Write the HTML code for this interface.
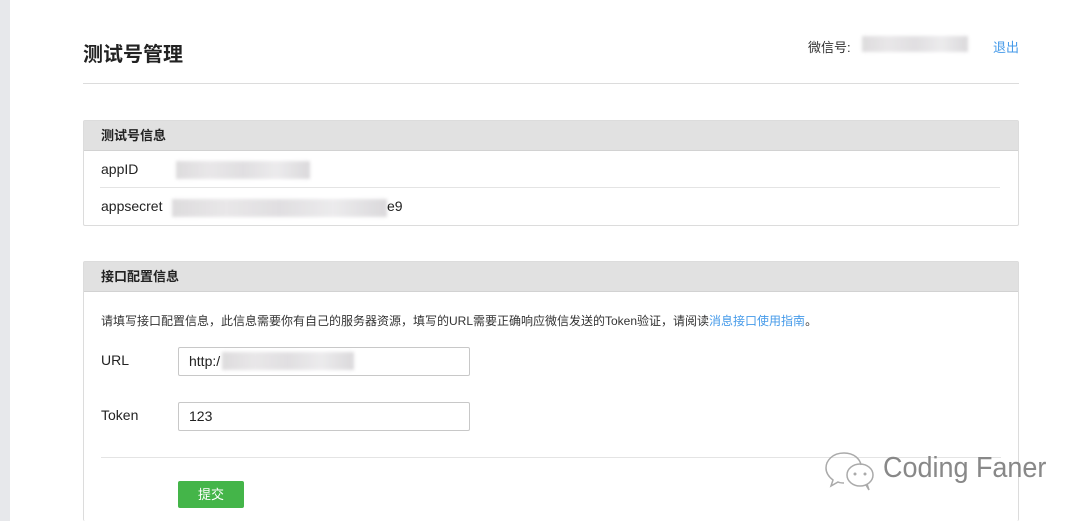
<!DOCTYPE html>
<html><head><meta charset="utf-8"><style>
*{margin:0;padding:0;box-sizing:border-box}
html,body{width:1080px;height:521px;overflow:hidden}
body{background:#fff;font-family:"Liberation Sans","Noto Sans CJK SC",sans-serif;color:#222;position:relative}
.side{position:absolute;left:0;top:0;width:10px;height:521px;background:#e7e8eb}
.a{position:absolute}
.blur{position:absolute;background:linear-gradient(90deg,#d5d3d5,#e4e2e4,#d9d7da,#e8e7e9,#d2d0d3);filter:blur(1.5px);opacity:.8}
.panel{position:absolute;left:83px;width:936px;border:1px solid #dcdcdc;border-radius:2px}
.ph{height:30px;background:#e1e1e1;border-bottom:1px solid #d2d2d2;font-size:13px;font-weight:bold;padding-left:17px;line-height:29px}
.inp{position:absolute;left:178px;width:292px;height:29px;border:1px solid #c8c8c8;border-radius:2px;font-size:14px;padding-left:10px;line-height:27px}
</style></head><body>
<div class="side"></div>
<div class="a" style="left:83px;top:38px;font-size:20px;font-weight:bold;color:#222">测试号管理</div>
<div class="a" style="left:808px;top:37px;font-size:13px;color:#333">微信号:</div>
<div class="blur" style="left:862px;top:36px;width:106px;height:16px"></div>
<div class="a" style="left:993px;top:37px;font-size:13px;color:#459ae9">退出</div>
<div class="a" style="left:83px;top:83px;width:936px;height:1px;background:#dcdcdc"></div>

<div class="panel" style="top:120px;height:106px">
<div class="ph">测试号信息</div>
<div class="a" style="left:17px;top:40px;font-size:14px">appID</div>
<div class="blur" style="left:92px;top:40px;width:134px;height:18px"></div>
<div class="a" style="left:16px;top:66px;width:900px;height:1px;background:#e4e4e4"></div>
<div class="a" style="left:17px;top:77px;font-size:14px">appsecret</div>
<div class="blur" style="left:88px;top:78px;width:215px;height:18px"></div>
<div class="a" style="left:303px;top:77px;font-size:14px">e9</div>
</div>

<div class="panel" style="top:261px;height:260px;border-bottom:none">
<div class="ph">接口配置信息</div>
</div>
<div class="a" style="left:101px;top:312px;font-size:12px;color:#333">请填写接口配置信息，此信息需要你有自己的服务器资源，填写的URL需要正确响应微信发送的Token验证，请阅读<span style="color:#459ae9">消息接口使用指南</span>。</div>
<div class="a" style="left:101px;top:352px;font-size:14px">URL</div>
<div class="inp" style="top:347px">http:/</div>
<div class="blur" style="left:222px;top:352px;width:132px;height:18px"></div>
<div class="a" style="left:101px;top:407px;font-size:14px">Token</div>
<div class="inp" style="top:402px">123</div>
<div class="a" style="left:101px;top:457px;width:900px;height:1px;background:#e4e4e4"></div>
<div class="a" style="left:178px;top:481px;width:66px;height:27px;background:#44b549;border-radius:2px;color:#fff;font-size:13px;text-align:center;line-height:27px">提交</div>
<svg class="a" style="left:822px;top:445px" width="60" height="48" viewBox="0 0 60 48"><path d="M22 8 C10 8 4 16 4 23 C4 28 7 32 11 35 L9 41 L16 37 C18 38 20 38 22 38" fill="none" stroke="#aaa" stroke-width="1.5"/><path d="M22 8 C32 8 38 14 39 20" fill="none" stroke="#aaa" stroke-width="1.5"/><ellipse cx="38" cy="30" rx="13" ry="11" fill="none" stroke="#aaa" stroke-width="1.5"/><path d="M44 40 L47 45 L45 39" fill="none" stroke="#aaa" stroke-width="1.5"/><circle cx="33" cy="29" r="1.5" fill="#aaa"/><circle cx="43" cy="29" r="1.5" fill="#aaa"/></svg>
<div class="a" style="left:883px;top:452px;font-size:29px;color:#888;transform:scaleX(0.93);transform-origin:left top;white-space:nowrap">Coding Faner</div>
</body></html>
